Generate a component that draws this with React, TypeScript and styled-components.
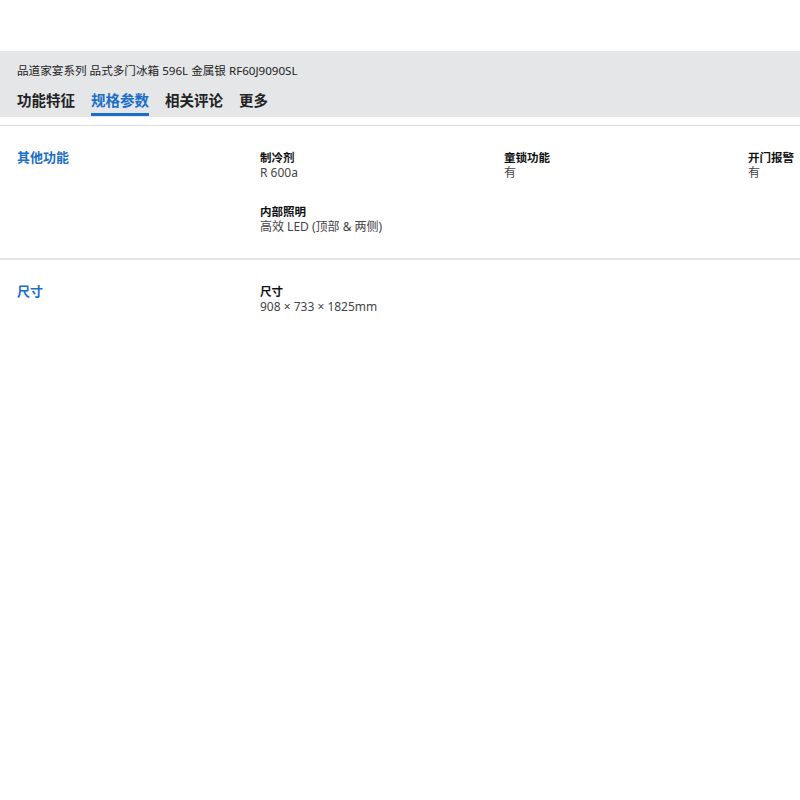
import React from 'react';
import styled, {createGlobalStyle} from "styled-components";

const GlobalStyle = createGlobalStyle`
  body {
    margin: 0;
    background: #fff;
    font-family: "Noto Sans", "Noto Sans CJK SC", sans-serif;
    color: #222;
  }
`;

const Page = styled.div`
  padding-top: 51px;
`;

const Header = styled.div`
  background: #e5e6e8;
  height: 66px;
  box-sizing: border-box;
  padding: 12px 0 1px 17px;
`;

const Subtitle = styled.div`
  font-size: 11.6px;
  line-height: 16px;
  color: #222;
  white-space: nowrap;
`;

const Tabs = styled.div`
  display: flex;
  gap: 16px;
  margin-top: 11px;
`;

const Tab = styled.div<{ $active?: boolean }>`
  font-size: 14.5px;
  line-height: 20px;
  font-weight: 700;
  padding-bottom: 3px;
  border-bottom: 3px solid ${p => (p.$active ? "#1a6ec8" : "transparent")};
  color: ${p => (p.$active ? "#1a6ec8" : "#222")};
`;

const TopRule = styled.div`
  margin-top: 8px;
  border-top: 1px solid #dcdcdc;
`;

const Section = styled.section<{ $last?: boolean }>`
  display: grid;
  grid-template-columns: 243px 244px 244px 1fr;
  padding: 24px 0 24px 17px;
  row-gap: 24px;
  border-bottom: ${p => (p.$last ? "none" : "2px solid #e6e6e6")};
`;

const SectionTitle = styled.h3<{ $rows: number }>`
  margin: 0;
  font-size: 13px;
  line-height: 15px;
  font-weight: 700;
  color: #1a6ec8;
  grid-row: 1 / span ${p => p.$rows};
`;

const Item = styled.div`
  display: flex;
  flex-direction: column;
  white-space: nowrap;
`;

const ItemLabel = styled.div`
  font-size: 11.5px;
  line-height: 15px;
  font-weight: 700;
  color: #111;
`;

const ItemValue = styled.div`
  font-size: 12px;
  line-height: 15px;
  color: #444;
`;

type Spec = { label: string; value: string };

const sections: { title: string; items: Spec[] }[] = [
  {
    title: "其他功能",
    items: [
      {label: "制冷剂", value: "R 600a"},
      {label: "童锁功能", value: "有"},
      {label: "开门报警", value: "有"},
      {label: "内部照明", value: "高效 LED (顶部 & 两侧)"},
    ],
  },
  {
    title: "尺寸",
    items: [{label: "尺寸", value: "908 × 733 × 1825mm"}],
  },
];

const App: React.FC = () => {
  return (
    <Page>
      <GlobalStyle/>
      <Header>
        <Subtitle>品道家宴系列 品式多门冰箱 596L 金属银 RF60J9090SL</Subtitle>
        <Tabs>
          <Tab>功能特征</Tab>
          <Tab $active>规格参数</Tab>
          <Tab>相关评论</Tab>
          <Tab>更多</Tab>
        </Tabs>
      </Header>
      <TopRule/>
      {sections.map((s, i) => (
        <Section key={s.title} $last={i === sections.length - 1}>
          <SectionTitle $rows={Math.ceil(s.items.length / 3)}>{s.title}</SectionTitle>
          {s.items.map(item => (
            <Item key={item.label}>
              <ItemLabel>{item.label}</ItemLabel>
              <ItemValue>{item.value}</ItemValue>
            </Item>
          ))}
        </Section>
      ))}
    </Page>
  );
};

export default App;
